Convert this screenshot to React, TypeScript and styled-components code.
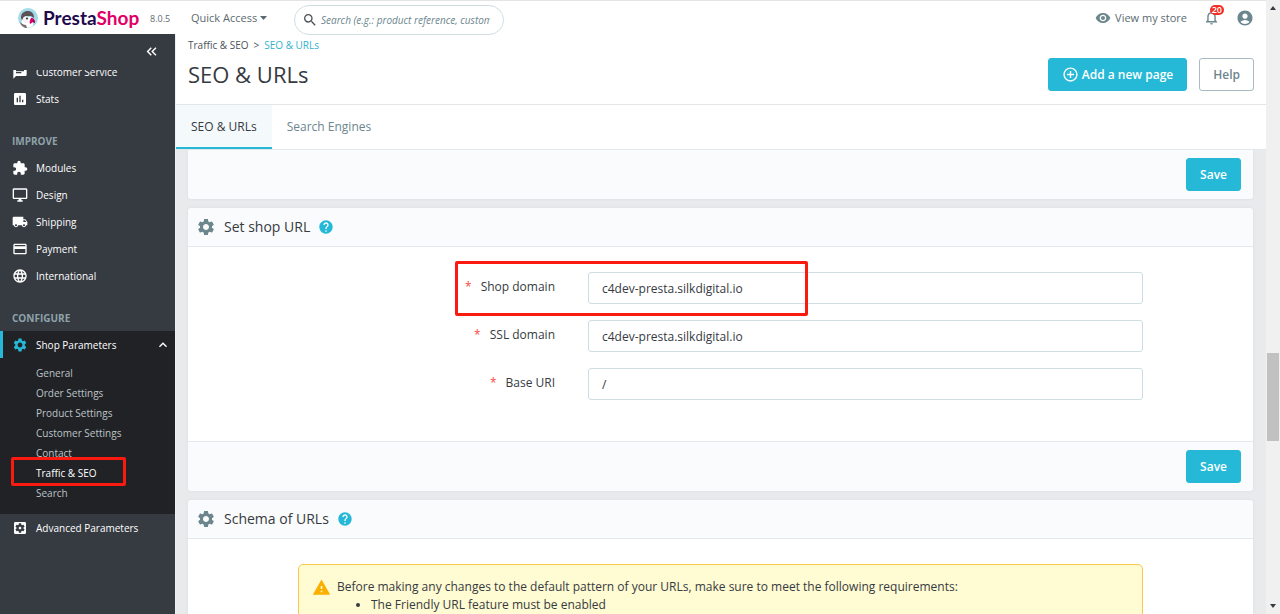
import React from "react";
import styled, { createGlobalStyle, css } from "styled-components";
import {
  MdAccountCircle,
  MdAddCircleOutline,
  MdAssessment,
  MdChat,
  MdCreditCard,
  MdExtension,
  MdHelp,
  MdKeyboardArrowUp,
  MdKeyboardDoubleArrowLeft,
  MdLanguage,
  MdLocalShipping,
  MdNotificationsNone,
  MdOutlineDesktopWindows,
  MdSearch,
  MdSettings,
  MdSettingsApplications,
  MdVisibility,
  MdWarning,
} from "react-icons/md";

const color = {
  primary: "#25b9d7",
  sidebar: "#363a41",
  sidebarActive: "#202226",
  text: "#363a41",
  muted: "#6c868e",
  line: "#e3e9ec",
  field: "#d0dde2",
  page: "#e8eaec",
  panel: "#fafbfc",
  mark: "#fb1a10",
};

const GlobalStyle = createGlobalStyle`
  *, *::before, *::after { box-sizing: border-box; }
  body {
    margin: 0;
    overflow: hidden;
    color: ${color.text};
    background: #fff;
    font: 400 12px/18px "Open Sans", sans-serif;
  }
  button, input { font: inherit; color: inherit; }
  a { color: inherit; text-decoration: none; }
  ul, ol, h1, h2, p { margin: 0; padding: 0; }
  svg { display: block; flex: none; }
`;

const Window = styled.div`
  display: flex;
  height: 100vh;
`;

const Shell = styled.div`
  flex: 1;
  min-width: 0;
  display: flex;
  flex-direction: column;
`;

const TopBar = styled.header`
  display: flex;
  align-items: center;
  height: 34px;
  flex: none;
  padding: 0 12px 0 18px;
  border-top: 1px solid #e4e4e4;
  font-size: 11px;
  color: #5b6a70;
`;

const Brand = styled.a`
  display: flex;
  align-items: center;
  gap: 5px;
  width: 126px;
`;

const BrandName = styled.span`
  font: 700 19px/24px Lato, sans-serif;
  color: #1f0a4c;
`;

const BrandAccent = styled.span`
  color: #df0067;
`;

const Version = styled.span`
  width: 47px;
  padding-left: 6px;
  padding-top: 3px;
  font-size: 9px;
`;

const QuickAccess = styled.button`
  display: flex;
  align-items: center;
  gap: 3px;
  width: 103px;
  padding: 0;
  border: 0;
  background: none;
  white-space: nowrap;
`;

const SearchBox = styled.label`
  display: flex;
  align-items: center;
  gap: 3px;
  width: 210px;
  height: 30px;
  margin-top: 4px;
  padding: 0 13px 0 7px;
  border: 1px solid ${color.field};
  border-radius: 15px;
  background: #fff;
`;

const SearchInput = styled.input`
  flex: 1;
  min-width: 0;
  padding: 0;
  border: 0;
  outline: 0;
  background: none;
  font-size: 10px;
  font-style: italic;
  &::placeholder { color: ${color.muted}; opacity: 1; }
`;

const TopActions = styled.div`
  display: flex;
  align-items: center;
  gap: 16px;
  margin-left: auto;
`;

const StoreLink = styled.a`
  display: flex;
  align-items: center;
  gap: 4px;
`;

const IconButton = styled.button`
  position: relative;
  padding: 0;
  border: 0;
  background: none;
  color: ${color.muted};
`;

const Badge = styled.span`
  position: absolute;
  top: -4px;
  right: -4px;
  padding: 0 2px;
  border-radius: 5px;
  background: #f32f25;
  color: #fff;
  font-size: 9px;
  font-weight: 600;
  line-height: 10px;
`;

const Body = styled.div`
  flex: 1;
  min-height: 0;
  display: flex;
`;

const Sidebar = styled.nav`
  width: 175px;
  flex: none;
  display: flex;
  flex-direction: column;
  background: ${color.sidebar};
  color: #fff;
  font-size: 10px;
`;

const CollapseButton = styled.button`
  display: flex;
  align-items: center;
  justify-content: flex-end;
  height: 36px;
  flex: none;
  padding: 0 15px 2px;
  border: 0;
  background: none;
  color: #fff;
`;

const MenuScroll = styled.div`
  flex: 1;
  min-height: 0;
  overflow: hidden;
`;

const Menu = styled.ul<{ $scrolled?: boolean }>`
  list-style: none;
  margin-top: ${(p) => (p.$scrolled ? "-12px" : "0")};
`;

const SectionTitle = styled.h2`
  padding: 19px 12px 3px;
  color: #8ea3aa;
  font-size: 10px;
  font-weight: 700;
  line-height: 20px;
`;

const MenuItem = styled.li<{ $open?: boolean }>`
  background: ${(p) => (p.$open ? color.sidebarActive : "transparent")};
`;

const MenuLink = styled.a<{ $active?: boolean }>`
  display: grid;
  grid-template-columns: 16px 1fr auto;
  align-items: center;
  column-gap: 8px;
  height: 27px;
  padding: 0 4px 0 12px;
  font-weight: 500;
  ${(p) =>
    p.$active &&
    css`
      box-shadow: inset 3px 0 0 ${color.primary};
      & > svg:first-child { color: ${color.primary}; }
    `}
`;

const SubMenu = styled.ul`
  list-style: none;
  padding: 5px 0 11px 36px;
`;

const SubItem = styled.li`
  position: relative;
  line-height: 20px;
`;

const SubLink = styled.a<{ $active?: boolean }>`
  color: ${(p) => (p.$active ? "#fff" : "#bec3c7")};
  font-weight: ${(p) => (p.$active ? 500 : 400)};
`;

const Mark = styled.span<{ $inset: string }>`
  position: absolute;
  inset: ${(p) => p.$inset};
  border: 3px solid ${color.mark};
  border-radius: 2px;
  pointer-events: none;
`;

const Content = styled.div`
  flex: 1;
  min-width: 0;
  display: flex;
  flex-direction: column;
  border-left: 1px solid #eef0f2;
`;

const PageHeader = styled.div`
  display: flex;
  align-items: flex-start;
  justify-content: space-between;
  height: 70px;
  flex: none;
  padding: 3px 12px 0;
`;

const Breadcrumb = styled.ol`
  display: flex;
  gap: 5px;
  list-style: none;
  font-size: 10px;
  line-height: 17px;
`;

const Crumb = styled.li<{ $current?: boolean }>`
  color: ${(p) => (p.$current ? "#34b1d0" : "#4c5357")};
  font-weight: ${(p) => (p.$current ? 500 : 400)};
`;

const PageTitle = styled.h1`
  font-size: 22px;
  font-weight: 400;
  line-height: 40px;
`;

const HeaderActions = styled.div`
  display: flex;
  gap: 12px;
  padding-top: 21px;
`;

const Button = styled.button<{ $outline?: boolean }>`
  display: flex;
  align-items: center;
  gap: 3px;
  height: 33px;
  padding: 0 13px;
  border: 1px solid ${(p) => (p.$outline ? "#a9bac0" : color.primary)};
  border-radius: 3px;
  background: ${(p) => (p.$outline ? "#fff" : color.primary)};
  color: ${(p) => (p.$outline ? color.muted : "#fff")};
  font-weight: 600;
  white-space: nowrap;
`;

const Tabs = styled.div`
  display: flex;
  height: 46px;
  flex: none;
  border-top: 1px solid #e4e7e9;
  border-bottom: 1px solid #e4e7e9;
`;

const Tab = styled.a<{ $active?: boolean }>`
  padding: 0 15px;
  color: ${(p) => (p.$active ? color.text : color.muted)};
  background: ${(p) => (p.$active ? "#f4f9fc" : "none")};
  box-shadow: ${(p) => (p.$active ? `inset 0 -2px 0 ${color.primary}` : "none")};
  line-height: 43px;
`;

const Panels = styled.main`
  flex: 1;
  min-height: 0;
  overflow: hidden;
  display: flex;
  flex-direction: column;
  gap: 9px;
  padding: 0 13px 0 12px;
  background: ${color.page};
`;

const Card = styled.section<{ $continued?: boolean }>`
  flex: none;
  border-radius: ${(p) => (p.$continued ? "0 0 4px 4px" : "4px")};
  background: #fff;
  box-shadow: 0 0 3px #d9dfe2;
  overflow: hidden;
`;

const CardHeader = styled.h2`
  display: flex;
  align-items: center;
  gap: 8px;
  height: 39px;
  padding: 0 8px;
  border-bottom: 1px solid ${color.line};
  background: ${color.panel};
  font-size: 14px;
  font-weight: 500;
  line-height: 20px;
  & > svg:first-child { color: ${color.muted}; }
  & > svg:last-child { color: ${color.primary}; }
`;

const CardBody = styled.div`
  padding: 25px 16px 41px;
`;

const Column = styled.div`
  display: grid;
  gap: 16px;
  width: 100%;
  max-width: 845px;
  margin: 0 auto;
`;

const CardFooter = styled.div<{ $plain?: boolean }>`
  display: flex;
  justify-content: flex-end;
  padding: 8px 12px;
  border-top: ${(p) => (p.$plain ? "0" : `1px solid ${color.line}`)};
  background: ${color.panel};
`;

const Field = styled.div`
  position: relative;
  display: grid;
  grid-template-columns: 257px 1fr;
  column-gap: 33px;
`;

const Label = styled.label`
  text-align: right;
  line-height: 30px;
`;

const Required = styled.span`
  margin-right: 9px;
  color: #f54c3e;
`;

const TextInput = styled.input`
  width: 100%;
  height: 32px;
  padding: 0 13px;
  border: 1px solid ${color.field};
  border-radius: 3px;
  background: #fff;
`;

const Alert = styled.div`
  display: flex;
  gap: 6px;
  padding: 13px 13px 40px;
  border: 1px solid #fbc94a;
  border-radius: 5px;
  background: #fffbd3;
  & > svg { color: #fab000; }
`;

const Requirements = styled.ul`
  padding-left: 34px;
`;

const Rail = styled.div`
  display: flex;
  flex-direction: column;
  align-items: center;
  width: 14px;
  flex: none;
  padding: 6px 1px;
  background: #f0f0f0;
`;

const Track = styled.div`
  flex: 1;
  align-self: stretch;
  display: flex;
  flex-direction: column;
  &::before { content: ""; flex: 341; }
  &::after { content: ""; flex: 162; }
`;

const Thumb = styled.div`
  flex: 87;
  background: #c1c1c1;
`;

const Puffin = () => (
  <svg width="20" height="20" viewBox="0 0 20 20" aria-hidden="true">
    <circle cx="10" cy="10" r="10" fill="#a4dbe8" />
    <path d="M4 17c-1-3 0-6 2-8l7 0c2 2 2 6 2 9a9 9 0 0 1-11-1z" fill="#fff" />
    <path d="M3 10c0-5 3-7 7-7s6 3 6 7l-3-2-5 0-4 4z" fill="#5b5356" />
    <path d="M5 10c1-2 4-2 5-1s1 5-1 6-5-2-4-5z" fill="#f3f3f3" />
    <circle cx="9" cy="10.5" r="1" fill="#35302f" />
    <path d="M13 10c3 0 4 2 4 5l-2-1-3 2c-1-2 0-4 1-6z" fill="#df0067" />
    <path d="M15 11c1 1 2 2 2 4l-2-1z" fill="#8e0a4c" />
    <path d="M2 14c2 2 4 3 6 3l1 3c-3 0-6-2-7-6z" fill="#7b6f70" />
  </svg>
);

const Arrow = ({ up, size = 7 }: { up?: boolean; size?: number }) => (
  <svg width={size} height="4" viewBox="0 0 8 4" preserveAspectRatio="none" aria-hidden="true">
    <path d={up ? "M0 4 4 0l4 4z" : "M0 0h8L4 4z"} fill="currentColor" />
  </svg>
);

const improve = [
  { label: "Modules", Icon: MdExtension },
  { label: "Design", Icon: MdOutlineDesktopWindows },
  { label: "Shipping", Icon: MdLocalShipping },
  { label: "Payment", Icon: MdCreditCard },
  { label: "International", Icon: MdLanguage },
];

const shopPages = [
  "General",
  "Order Settings",
  "Product Settings",
  "Customer Settings",
  "Contact",
  "Traffic & SEO",
  "Search",
];

const fields = [
  { id: "shop-domain", label: "Shop domain", value: "c4dev-presta.silkdigital.io", marked: true },
  { id: "ssl-domain", label: "SSL domain", value: "c4dev-presta.silkdigital.io" },
  { id: "base-uri", label: "Base URI", value: "/" },
];

export default function App() {
  return (
    <>
      <GlobalStyle />
      <Window>
        <Shell>
          <TopBar>
            <Brand href="#">
              <Puffin />
              <BrandName>
                Presta<BrandAccent>Shop</BrandAccent>
              </BrandName>
            </Brand>
            <Version>8.0.5</Version>
            <QuickAccess type="button">
              Quick Access <Arrow />
            </QuickAccess>
            <SearchBox aria-label="Search">
              <MdSearch size={16} color="#4c5357" />
              <SearchInput type="text" placeholder="Search (e.g.: product reference, customer name…)" />
            </SearchBox>
            <TopActions>
              <StoreLink href="#">
                <MdVisibility size={16} color={color.muted} />
                View my store
              </StoreLink>
              <IconButton type="button" aria-label="Notifications">
                <MdNotificationsNone size={17} />
                <Badge>20</Badge>
              </IconButton>
              <IconButton type="button" aria-label="Account">
                <MdAccountCircle size={18} />
              </IconButton>
            </TopActions>
          </TopBar>

          <Body>
            <Sidebar>
              <CollapseButton type="button" aria-label="Collapse menu">
                <MdKeyboardDoubleArrowLeft size={17} />
              </CollapseButton>
              <MenuScroll>
                <Menu $scrolled>
                  <MenuItem>
                    <MenuLink href="#">
                      <MdChat size={16} /> Customer Service
                    </MenuLink>
                  </MenuItem>
                  <MenuItem>
                    <MenuLink href="#">
                      <MdAssessment size={16} /> Stats
                    </MenuLink>
                  </MenuItem>
                </Menu>
                <SectionTitle>IMPROVE</SectionTitle>
                <Menu>
                  {improve.map(({ label, Icon }) => (
                    <MenuItem key={label}>
                      <MenuLink href="#">
                        <Icon size={16} /> {label}
                      </MenuLink>
                    </MenuItem>
                  ))}
                </Menu>
                <SectionTitle>CONFIGURE</SectionTitle>
                <Menu>
                  <MenuItem $open>
                    <MenuLink href="#" $active>
                      <MdSettings size={16} /> Shop Parameters <MdKeyboardArrowUp size={16} />
                    </MenuLink>
                    <SubMenu>
                      {shopPages.map((page) => {
                        const active = page === "Traffic & SEO";
                        return (
                          <SubItem key={page}>
                            <SubLink href="#" $active={active}>
                              {page}
                            </SubLink>
                            {active && <Mark $inset="-6px 49px -3px -25px" />}
                          </SubItem>
                        );
                      })}
                    </SubMenu>
                  </MenuItem>
                  <MenuItem>
                    <MenuLink href="#">
                      <MdSettingsApplications size={16} /> Advanced Parameters
                    </MenuLink>
                  </MenuItem>
                </Menu>
              </MenuScroll>
            </Sidebar>

            <Content>
              <PageHeader>
                <div>
                  <Breadcrumb>
                    <Crumb>
                      <a href="#">Traffic &amp; SEO</a>
                    </Crumb>
                    <Crumb aria-hidden="true">&gt;</Crumb>
                    <Crumb $current>
                      <a href="#">SEO &amp; URLs</a>
                    </Crumb>
                  </Breadcrumb>
                  <PageTitle>SEO &amp; URLs</PageTitle>
                </div>
                <HeaderActions>
                  <Button type="button">
                    <MdAddCircleOutline size={17} /> Add a new page
                  </Button>
                  <Button type="button" $outline>
                    Help
                  </Button>
                </HeaderActions>
              </PageHeader>
              <Tabs>
                <Tab href="#" $active>
                  SEO &amp; URLs
                </Tab>
                <Tab href="#">Search Engines</Tab>
              </Tabs>

              <Panels>
                <Card $continued>
                  <CardFooter $plain>
                    <Button type="button">Save</Button>
                  </CardFooter>
                </Card>

                <Card>
                  <CardHeader>
                    <MdSettings size={20} /> Set shop URL <MdHelp size={16} />
                  </CardHeader>
                  <CardBody>
                    <Column>
                      {fields.map((f) => (
                        <Field key={f.id}>
                          <Label htmlFor={f.id}>
                            <Required>*</Required>
                            {f.label}
                          </Label>
                          <TextInput id={f.id} type="text" defaultValue={f.value} />
                          {f.marked && <Mark $inset="-11px 335px -12px 157px" />}
                        </Field>
                      ))}
                    </Column>
                  </CardBody>
                  <CardFooter>
                    <Button type="button">Save</Button>
                  </CardFooter>
                </Card>

                <Card>
                  <CardHeader>
                    <MdSettings size={20} /> Schema of URLs <MdHelp size={16} />
                  </CardHeader>
                  <CardBody>
                    <Column>
                      <Alert>
                        <MdWarning size={19} />
                        <div>
                          <p>
                            Before making any changes to the default pattern of your URLs, make sure to meet the
                            following requirements:
                          </p>
                          <Requirements>
                            <li>The Friendly URL feature must be enabled</li>
                          </Requirements>
                        </div>
                      </Alert>
                    </Column>
                  </CardBody>
                </Card>
              </Panels>
            </Content>
          </Body>
        </Shell>
        <Rail aria-hidden="true">
          <Arrow up size={6} />
          <Track>
            <Thumb />
          </Track>
          <Arrow size={6} />
        </Rail>
      </Window>
    </>
  );
}
